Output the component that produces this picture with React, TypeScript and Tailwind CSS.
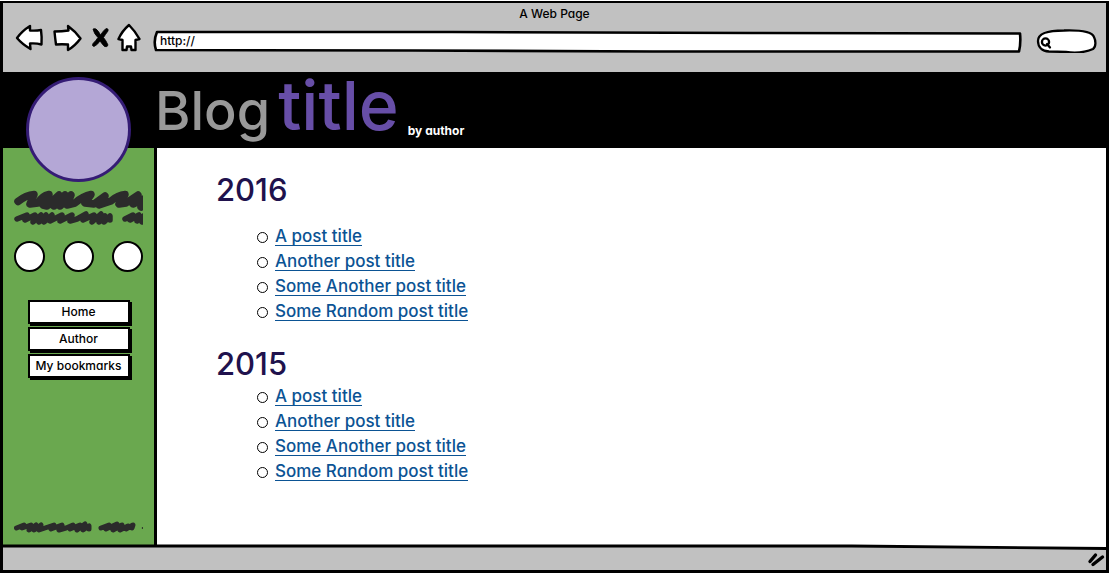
import React from "react";

const posts = [
  "A post title",
  "Another post title",
  "Some Another post title",
  "Some Random post title",
];

const navButton =
  "flex h-6 w-[102px] items-center justify-center whitespace-nowrap border-2 border-black bg-white text-xs font-medium leading-4 shadow-[2px_2px_0_#000]";

function BackIcon() {
  return (
    <svg width="30" height="28" viewBox="0 0 30 28" fill="#fff" stroke="#000" strokeWidth="2.4" strokeLinejoin="round">
      <path d="M2 14 Q7 7 15 2 L15 6.500 Q21 7 26 6 Q27 13 26.500 20.500 Q21 19 15 19.500 L15.500 25 Q7 20 2 14Z" />
    </svg>
  );
}

function ForwardIcon() {
  return (
    <svg width="30" height="28" viewBox="0 0 30 28" fill="#fff" stroke="#000" strokeWidth="2.4" strokeLinejoin="round">
      <path d="M1.500 7.500 Q9 7.500 15.500 6.500 L15 2 Q22 7 27.500 14.500 Q22 22 15 26 L15 20.500 Q9 20 3 20.500 Q2 13 1.500 7.500Z" />
    </svg>
  );
}

function StopIcon() {
  return (
    <svg width="18" height="22" viewBox="0 0 18 22" fill="#000" stroke="#000" strokeWidth="0.8" strokeLinejoin="round">
      <path d="M2 2 Q5 0.500 7.500 4.500 L9.500 8 Q12 4 15 1.500 Q18 1.500 17 4 Q14 8 12.500 10.500 Q15 13.500 17 18 Q16.500 20.500 13.500 19.500 Q11 17 9 14 Q6.500 18 3 19.500 Q0.500 19 2 16.500 Q5 13.500 7 10.500 Q3 7 2 2Z" />
    </svg>
  );
}

function HomeIcon() {
  return (
    <svg width="24" height="29" viewBox="0 0 24 29" fill="#fff" stroke="#000" strokeWidth="2.4" strokeLinejoin="round">
      <path d="M12 2 Q18 8 22.500 16 L18.500 17 L18.500 27 L14.500 27 L14 23.500 L10 23.500 L9.500 27 L5.500 27 L5.500 17 L1.500 16 Q5 8 12 2Z" />
    </svg>
  );
}

function BrowserBar() {
  return (
    <header className="h-[69px] bg-[#c1c1c1]">
      <p className="pt-[3px] text-center text-xs font-medium leading-4">A Web Page</p>
      <div className="flex items-start pl-3 pr-2">
        <div className="flex h-[31px] items-center">
          <button aria-label="Back" className="mr-2"><BackIcon /></button>
          <button aria-label="Forward" className="mr-2"><ForwardIcon /></button>
          <button aria-label="Stop" className="mr-2"><StopIcon /></button>
          <button aria-label="Home"><HomeIcon /></button>
        </div>
        <div className="relative ml-3 mr-[14px] mt-[7px] h-6 min-w-0 flex-1">
          <svg className="absolute inset-0 h-full w-full" viewBox="0 0 870 24" preserveAspectRatio="none" fill="#fff" stroke="#000" strokeWidth="2.6" strokeLinejoin="round">
            <path vectorEffect="non-scaling-stroke" d="M4 3 L300 3 L600 4 L868 4.500 Q869 14 867 22.500 L500 22.500 L260 21.500 L3 21 Q0 12 4 3Z" />
          </svg>
          <input aria-label="Address" defaultValue="http://" className="relative block h-full w-full bg-transparent px-[7px] pb-[2px] text-xs font-medium outline-none" />
        </div>
        <div className="relative mt-[7px] h-6 w-[62px] shrink-0">
          <svg className="absolute inset-0 h-full w-full" viewBox="0 0 62 24" fill="#fff" stroke="#000" strokeWidth="2.3" strokeLinejoin="round">
            <path d="M2 12 C2 4 12 1.500 28 1.500 C44 1 56 3 58 8 C60 12 60 18 57 20 C48 24 38 24 30 23 L13 22.500 C6 22 2 18 2 12Z" />
            <circle cx="9.500" cy="13" r="3.6" fill="none" />
            <path d="M11 15 L14 18.500" strokeLinecap="round" />
          </svg>
          <input aria-label="Search" className="relative block h-full w-full bg-transparent pl-5 pr-2 text-xs outline-none" />
        </div>
      </div>
    </header>
  );
}

function TextScribble() {
  return (
    <svg width="129" height="40" viewBox="0 0 129 40" fill="none" stroke="#2b2b2b" strokeLinecap="round" strokeLinejoin="round">
      <path strokeWidth="7.500" d="M4 13.500 Q12 7 20 6.500 L16 16 L24 15 Q28 8 35 6.500 L29 17 L33 18 L45 7 L40 18 L51 7 L46 18 L57 7 L53 17 L61 15 Q69 8 77 6.500 L71 15 L80 16 L91 8 L85 17 L97 13 Q104 7 111 6.500 L105 16 L112 15 L124 7 L119 16 L132 10 L127 19" />
      <path strokeWidth="5.500" d="M3 31 L13 27 L11 32 L21 27 L19 34 L27 27 L25 34 L32 27 L30 34 L38 27 L36 33 L48 27 L46 33 L58 27 L56 33 L63 31 L72 26 L69 32 L80 27 L78 34 L87 26 L85 34 L91 28 L90 34 L96 28 L96 32" />
      <path strokeWidth="5.500" d="M111 31 L119 27 L116 32 L125 27 L123 33 L131 27 L128 34" />
    </svg>
  );
}

function FooterScribble() {
  return (
    <svg width="129" height="14" viewBox="0 0 129 14" fill="none" stroke="#2b2b2b" strokeWidth="5" strokeLinecap="round" strokeLinejoin="round">
      <path d="M2.500 8 L10 5 L8 8 L17 5 L15 10 L22 5 L20 10 L27 5 L25 10 L31 8 L40 5 L37 9 L48 5 L45 10 L52 8 L59 5 L56 9 L66 5 L63 10 L71 4 L69 10 L75 6 L75 9" />
      <path d="M87 8 L95 5 L92 9 L103 4 L99 10 L108 5 L106 10 L114 6 L112 9 L119 5 L118 8" />
      <circle cx="128.500" cy="8" r="0.500" strokeWidth="1" />
    </svg>
  );
}

function Sidebar() {
  return (
    <aside className="flex w-[154px] shrink-0 flex-col items-center border-r-[3px] border-black bg-[#6aa84f]">
      <div className="relative -mt-[71px] h-[105px] w-[105px] shrink-0 rounded-full border-[3px] border-[#351c75] bg-[#b4a7d6]" />
      <div className="mt-[6px]"><TextScribble /></div>
      <div className="mt-[13px] flex gap-[18px]">
        {[0, 1, 2].map((n) => (
          <span key={n} className="h-[31px] w-[31px] rounded-full border-2 border-black bg-white" />
        ))}
      </div>
      <nav className="mt-7 flex flex-col gap-[3px]">
        <button className={navButton}>Home</button>
        <button className={navButton}>Author</button>
        <button className={navButton}>My bookmarks</button>
      </nav>
      <div className="mb-3 mt-auto pt-6"><FooterScribble /></div>
    </aside>
  );
}

function PostList() {
  return (
    <ul className="pl-[41px]">
      {posts.map((title) => (
        <li key={title} className="flex h-[25px] items-center">
          <span className="mr-[7px] mt-[2px] h-[11px] w-[11px] rounded-full border border-black" />
          <a href="#" className="border-b border-[#0b5394] text-[17px] font-medium leading-[18px] text-[#0b5394]">{title}</a>
        </li>
      ))}
    </ul>
  );
}

export default function App() {
  return (
    <div className="min-h-screen bg-white py-px pr-px font-['Inter','Noto_Sans',sans-serif] text-black [font-feature-settings:'cv11']">
      <div className="flex min-h-[calc(100vh-2px)] flex-col border-[3px] border-t-2 border-black">
        <BrowserBar />
        <div className="flex h-[76px] bg-black pl-[152px]">
          <h1 className="flex items-baseline gap-2 font-medium leading-[67px]">
            <span className="text-[54px] text-[#999999]">Blog</span>
            <span className="text-[68px] text-[#674ea7]">title</span>
          </h1>
          <span className="mb-[9px] ml-[9px] self-end text-xs font-bold leading-4 text-white">by author</span>
        </div>
        <div className="flex flex-1">
          <Sidebar />
          <main className="flex-1 pb-8 pl-[59px] pt-[22px]">
            <h2 className="mb-[14px] text-[31px] font-medium leading-10 text-[#20124d]">2016</h2>
            <PostList />
            <h2 className="mt-5 text-[31px] font-medium leading-10 text-[#20124d]">2015</h2>
            <PostList />
          </main>
        </div>
        <footer className="relative flex h-6 items-center justify-end bg-[#c1c1c1] pr-px">
          <svg className="absolute inset-x-0 -top-1 h-2 w-full" viewBox="0 0 1105 8" preserveAspectRatio="none" fill="none">
            <path d="M850 4 L1105 7 L1105 0 L850 0Z" fill="#fff" />
            <path d="M0 4 L850 4 L1105 6.500" stroke="#000" strokeWidth="2.8" vectorEffect="non-scaling-stroke" />
          </svg>
          <svg className="mt-1" width="18" height="16" viewBox="0 0 18 16" fill="none" stroke="#000" strokeWidth="3.4" strokeLinecap="round">
            <path d="M3 9.500 L8.500 3 M6 12.500 L15.500 5" />
          </svg>
        </footer>
      </div>
    </div>
  );
}
